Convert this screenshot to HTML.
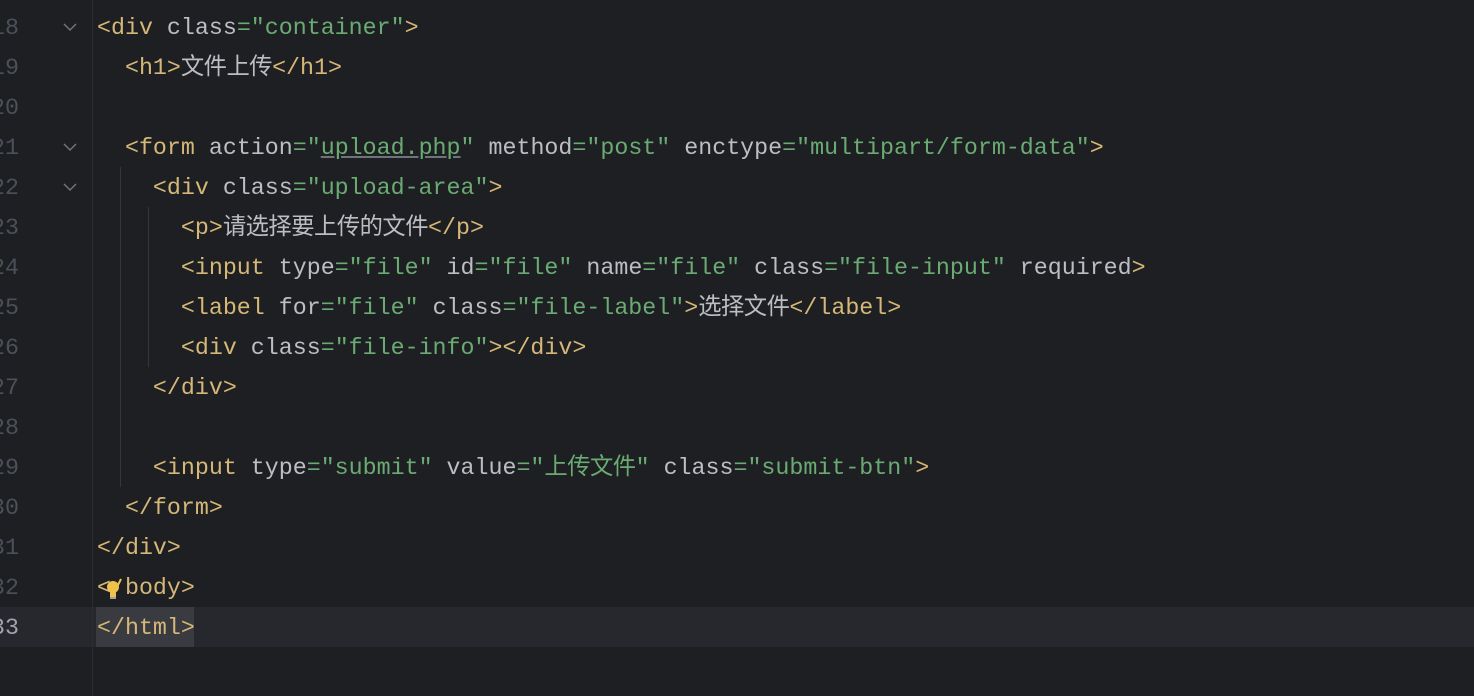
<!DOCTYPE html>
<html><head><meta charset="utf-8"><style>
html,body{margin:0;padding:0;background:#1e1f22;width:1474px;height:696px;overflow:hidden}
body{position:relative;font-family:"Liberation Mono","Noto Sans CJK SC",monospace;font-size:23.3px}
.ln{position:absolute;right:calc(1474px - 19px);color:#4b5059;line-height:40px;white-space:pre;text-align:right}
.cur{position:absolute;left:0;top:607px;width:1474px;height:40px;background:#26282e}
.sep{position:absolute;left:92px;top:0;width:1px;height:696px;background:#2b2d30}
.code{position:absolute;left:97px;white-space:pre;line-height:40px;color:#bcbec4}
.t{color:#d5b778}.s{color:#6aab73}.a{color:#bcbec4}
.z{letter-spacing:-0.5px}
.g{position:absolute;width:1px;background:#34363b}
.chev{position:absolute;left:63px;width:14px;height:10px}
.sel{position:absolute;left:96px;top:607px;width:98px;height:40px;background:#393b41}
</style></head><body>
<div class="cur"></div>
<div class="sel"></div>
<div class="sep"></div>
<div class="g" style="left:120px;top:167px;height:320px"></div>
<div class="g" style="left:148px;top:207px;height:160px"></div>
<svg class="chev" style="top:22px" viewBox="0 0 14 10"><path d="M1 2 L7 8 L13 2" fill="none" stroke="#6f737a" stroke-width="1.5"/></svg>
<svg class="chev" style="top:142px" viewBox="0 0 14 10"><path d="M1 2 L7 8 L13 2" fill="none" stroke="#6f737a" stroke-width="1.5"/></svg>
<svg class="chev" style="top:182px" viewBox="0 0 14 10"><path d="M1 2 L7 8 L13 2" fill="none" stroke="#6f737a" stroke-width="1.5"/></svg>
<div class="ln" style="top:8px">18
19
20
21
22
23
24
25
26
27
28
29
30
31
32
<span style="color:#a1a3ab">33</span></div>
<div class="code" style="top:8px"><span class="t">&lt;div </span><span class="a">class</span><span class="s">=</span><span class="s">"container"</span><span class="t">&gt;</span>
  <span class="t">&lt;h1&gt;</span><span class="z">文件上传</span><span class="t">&lt;/h1&gt;</span>

  <span class="t">&lt;form </span><span class="a">action</span><span class="s">=</span><span class="s">"<u style="text-decoration-color:#6f737a">upload.php</u>"</span> <span class="a">method</span><span class="s">=</span><span class="s">"post"</span> <span class="a">enctype</span><span class="s">=</span><span class="s">"multipart/form-data"</span><span class="t">&gt;</span>
    <span class="t">&lt;div </span><span class="a">class</span><span class="s">=</span><span class="s">"upload-area"</span><span class="t">&gt;</span>
      <span class="t">&lt;p&gt;</span><span class="z">请选择要上传的文件</span><span class="t">&lt;/p&gt;</span>
      <span class="t">&lt;input </span><span class="a">type</span><span class="s">=</span><span class="s">"file"</span> <span class="a">id</span><span class="s">=</span><span class="s">"file"</span> <span class="a">name</span><span class="s">=</span><span class="s">"file"</span> <span class="a">class</span><span class="s">=</span><span class="s">"file-input"</span> <span class="a">required</span><span class="t">&gt;</span>
      <span class="t">&lt;label </span><span class="a">for</span><span class="s">=</span><span class="s">"file"</span> <span class="a">class</span><span class="s">=</span><span class="s">"file-label"</span><span class="t">&gt;</span><span class="z">选择文件</span><span class="t">&lt;/label&gt;</span>
      <span class="t">&lt;div </span><span class="a">class</span><span class="s">=</span><span class="s">"file-info"</span><span class="t">&gt;&lt;/div&gt;</span>
    <span class="t">&lt;/div&gt;</span>

    <span class="t">&lt;input </span><span class="a">type</span><span class="s">=</span><span class="s">"submit"</span> <span class="a">value</span><span class="s">=</span><span class="s">"<span class="z">上传文件</span>"</span> <span class="a">class</span><span class="s">=</span><span class="s">"submit-btn"</span><span class="t">&gt;</span>
  <span class="t">&lt;/form&gt;</span>
<span class="t">&lt;/div&gt;</span>
<span class="t">&lt; body&gt;</span>
<span class="t">&lt;/html&gt;</span></div>
<svg style="position:absolute;left:105px;top:577px" width="18" height="24" viewBox="0 0 18 24"><circle cx="8" cy="10" r="6" fill="#f0c24b"/><rect x="5" y="15" width="6" height="5" fill="#f0c24b"/><path d="M5 21h6" stroke="#ccc" stroke-width="1.5"/><path d="M16 2 L11 12" stroke="#f0c24b" stroke-width="2"/></svg>
</body></html>
